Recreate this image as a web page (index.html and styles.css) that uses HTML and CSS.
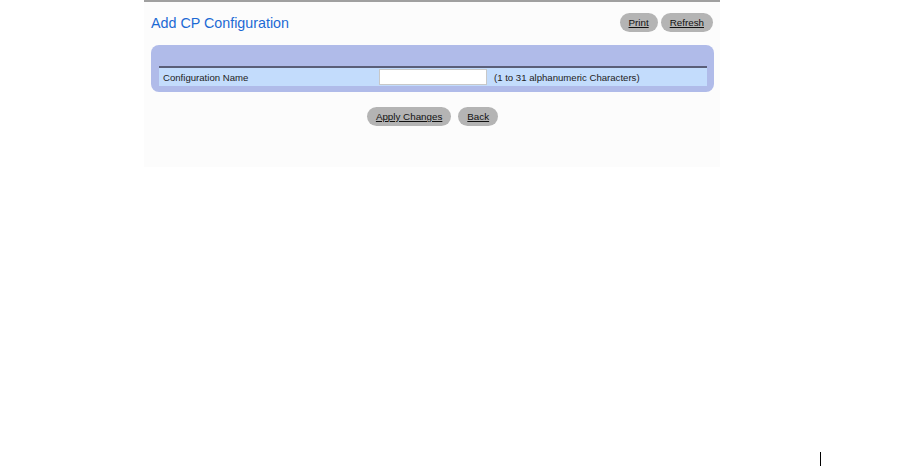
FILE: index.html
```html
<!DOCTYPE html>
<html lang="en">
<head>
  <meta charset="UTF-8" />
  <title>Add CP Configuration</title>
  <link rel="stylesheet" href="styles.css">
</head>
<body>

  <div class="page">
    <div class="header">
      <h1>Add CP Configuration</h1>
      <div class="tools">
        <a href="#" class="btn">Print</a>
        <a href="#" class="btn">Refresh</a>
      </div>
    </div>

    <div class="panel">
      <table class="form">
        <tr>
          <td class="label">Configuration Name</td>
          <td class="field"><input type="text" maxlength="31"></td>
          <td class="hint">(1 to 31 alphanumeric Characters)</td>
        </tr>
      </table>
    </div>

    <div class="actions">
      <a href="#" class="btn">Apply Changes</a>
      <a href="#" class="btn">Back</a>
    </div>
  </div>

  <div class="marker"></div>

</body>
</html>
```

FILE: styles.css
```css
* { box-sizing: border-box; }

body {
  margin: 0;
  font-family: "Liberation Sans", Arial, sans-serif;
  background: #fff;
  height: 466px;
  position: relative;
}

.page {
  margin-left: 144px;
  width: 576px;
  height: 167px;
  background: #fcfcfc;
  border-top: 2px solid #a0a0a0;
  padding: 0 6px 0 7px;
}

.header {
  display: flex;
  justify-content: space-between;
  align-items: center;
  height: 43px;
  padding-bottom: 2px;
}

h1 {
  margin: 0;
  font-size: 14.3px;
  font-weight: normal;
  color: #1c6ad4;
}

.tools {
  display: flex;
  gap: 3px;
  padding-right: 1px;
}

.btn {
  display: inline-block;
  background: #b4b4b4;
  color: #111;
  font-size: 9.8px;
  line-height: 19px;
  padding: 0 9px;
  border-radius: 10px;
  text-decoration: underline;
}

.panel {
  background: #b0bbe9;
  border-radius: 8px;
  padding: 21px 7px 7px 8px;
  height: 47px;
}

.form {
  width: 100%;
  border-collapse: collapse;
  border-top: 2px solid #5a5e78;
  background: #c3dcfc;
  font-size: 9.6px;
  color: #222;
}

.form td {
  padding: 1px 0 1px 4px;
  height: 18px;
}

.label { width: 216px; }

.field { width: 110px; }

.field input {
  width: 108px;
  height: 16px;
  border: 1px solid #c8c8c8;
  background: #fff;
  padding: 0 2px;
  display: block;
}

.hint { padding-left: 7px !important; }

.actions {
  display: flex;
  justify-content: center;
  gap: 7px;
  margin-top: 15px;
}

.marker {
  position: absolute;
  left: 820px;
  top: 452px;
  width: 1px;
  height: 14px;
  background: #000;
}
```
